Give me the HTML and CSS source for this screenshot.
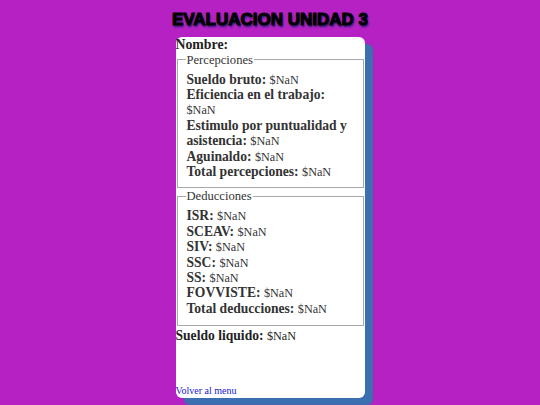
FILE: index.html
```html
<!DOCTYPE html>
<html lang="es">
<head>
<meta charset="utf-8">
<title>Evaluacion Unidad 3</title>
<link rel="stylesheet" href="styles.css">
</head>
<body>
<h1 class="title">EVALUACION UNIDAD 3</h1>
<main class="card">
  <div class="nombre">Nombre:</div>
  <fieldset class="group">
    <legend class="legend">Percepciones</legend>
    <div class="row"><b class="lbl">Sueldo bruto:</b> <span class="val">$NaN</span></div>
    <div class="row"><b class="lbl">Eficiencia en el trabajo:</b> <span class="val">$NaN</span></div>
    <div class="row"><b class="lbl">Estimulo por puntualidad y asistencia:</b> <span class="val">$NaN</span></div>
    <div class="row"><b class="lbl">Aguinaldo:</b> <span class="val">$NaN</span></div>
    <div class="row"><b class="lbl">Total percepciones:</b> <span class="val">$NaN</span></div>
  </fieldset>
  <fieldset class="group">
    <legend class="legend">Deducciones</legend>
    <div class="row"><b class="lbl">ISR:</b> <span class="val">$NaN</span></div>
    <div class="row"><b class="lbl">SCEAV:</b> <span class="val">$NaN</span></div>
    <div class="row"><b class="lbl">SIV:</b> <span class="val">$NaN</span></div>
    <div class="row"><b class="lbl">SSC:</b> <span class="val">$NaN</span></div>
    <div class="row"><b class="lbl">SS:</b> <span class="val">$NaN</span></div>
    <div class="row"><b class="lbl">FOVVISTE:</b> <span class="val">$NaN</span></div>
    <div class="row"><b class="lbl">Total deducciones:</b> <span class="val">$NaN</span></div>
  </fieldset>
  <div class="liquido"><b class="lbl">Sueldo liquido:</b> <span class="val">$NaN</span></div>
  <a class="back" href="#">Volver al menu</a>
</main>
</body>
</html>
```
FILE: styles.css
```css
html, body {
  margin: 0;
  padding: 0;
}
body {
  background: #b521c2;
  font-family: "Liberation Serif", "Times New Roman", serif;
  height: 405px;
  overflow: hidden;
}
.title {
  margin: 0;
  padding-top: 10px;
  height: 20px;
  line-height: 20px;
  text-align: center;
  font-family: "Liberation Sans", Arial, sans-serif;
  font-weight: bold;
  font-size: 17px;
  color: #000;
  -webkit-text-stroke: 1.1px #000;
  text-shadow: 1px 2px 2px #1c1c70;
}
.card {
  width: 189px;
  height: 361px;
  margin: 7px auto 0;
  background: #fff;
  border-radius: 6px;
  box-shadow: 8px 7px 1px #3b6fb0;
  display: flex;
  flex-direction: column;
  box-sizing: border-box;
  color: #333;
}
.nombre {
  font-weight: bold;
  font-size: 13.8px;
  line-height: 15.6px;
  color: #222;
}
.group {
  margin: 0 1px 1px;
  padding: 5px 9px 8px;
  border: 1px solid #a9a9a9;
  min-width: 0;
}
.group + .group {
  padding-bottom: 9px;
  margin-bottom: 2px;
}
.legend {
  font-size: 12.6px;
  line-height: 14px;
  padding: 0 1px;
  margin-left: -1px;
  color: #333;
}
.row, .liquido {
  font-size: 13.6px;
  line-height: 15.4px;
}
.liquido {
  color: #222;
}
.lbl {
  font-weight: bold;
  line-height: 15.4px;
}
.val {
  font-size: 12.2px;
  line-height: 10px;
}
.back {
  margin-top: auto;
  margin-bottom: 1px;
  font-size: 10px;
  line-height: 12px;
  color: #2020d0;
  text-decoration: none;
}
```
